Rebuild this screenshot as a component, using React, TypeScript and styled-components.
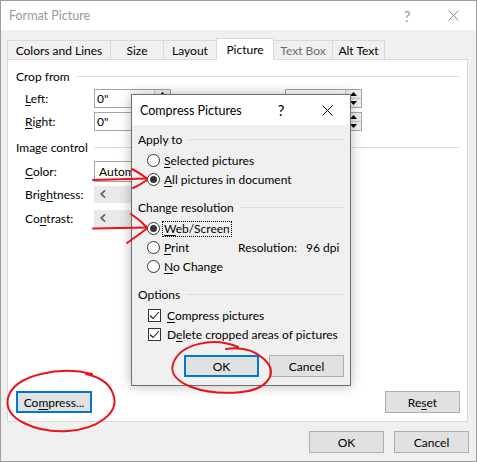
import React from "react";
import styled, { createGlobalStyle } from "styled-components";

const FONT = `Lato, "Noto Sans", Arial, sans-serif`;

const GlobalStyle = createGlobalStyle`
  html, body { margin: 0; padding: 0; background: #ffffff; }
  body { font-family: ${FONT}; font-size: 12px; color: #000; }
  *, *::before, *::after { box-sizing: border-box; }
  u { text-decoration: underline; text-underline-offset: 2px; }
`;

const Window = styled.div`
  position: relative;
  width: 477px;
  height: 462px;
  border: 1px solid #9c9c9c;
  background: #f0f0f0;
  display: flex;
  flex-direction: column;
  overflow: hidden;
`;

const TitleBar = styled.div<{ $active?: boolean }>`
  height: ${(p) => (p.$active ? 30 : 29)}px;
  flex: none;
  background: #ffffff;
  display: flex;
  align-items: center;
  padding-left: 8px;
  color: ${(p) => (p.$active ? "#000" : "#999999")};
  font-size: 12.5px;
`;

const TitleText = styled.span`
  flex: 1;
`;

const CaptionButton = styled.span<{ $active?: boolean }>`
  width: 46px;
  height: 100%;
  display: flex;
  align-items: center;
  justify-content: center;
  color: ${(p) => (p.$active ? "#000" : "#999999")};
  font-size: 15px;
`;

const Body = styled.div`
  flex: 1;
  display: flex;
  flex-direction: column;
  padding: 8px 8px 8px 6px;
`;

const TabRow = styled.div`
  display: flex;
  align-items: flex-end;
  height: 21px;
`;

const Tab = styled.div<{ $w: number; $active?: boolean; $disabled?: boolean }>`
  position: relative;
  z-index: ${(p) => (p.$active ? 2 : 0)};
  width: ${(p) => p.$w}px;
  height: ${(p) => (p.$active ? 22 : 19)}px;
  margin-left: -1px;
  margin-bottom: ${(p) => (p.$active ? -1 : 0)}px;
  border: 1px solid #d9d9d9;
  border-bottom: none;
  background: ${(p) => (p.$active ? "#ffffff" : "#f0f0f0")};
  color: ${(p) => (p.$disabled ? "#6d6d6d" : "#000")};
  display: flex;
  align-items: center;
  justify-content: center;
  padding-top: ${(p) => (p.$active ? 0 : 1)}px;
  white-space: nowrap;
  &:first-child {
    margin-left: 0;
  }
`;

const Panel = styled.div`
  position: relative;
  z-index: 1;
  height: 363px;
  background: #ffffff;
  border: 1px solid #d9d9d9;
  display: flex;
  flex-direction: column;
  padding: 8px 7px 8px 8px;
`;

const GroupHeader = styled.div<{ $mt?: number }>`
  display: flex;
  align-items: center;
  gap: 6px;
  height: 16px;
  margin-top: ${(p) => p.$mt ?? 0}px;
  white-space: nowrap;
  &::after {
    content: "";
    flex: 1;
    height: 1px;
    background: #dcdcdc;
  }
`;

const FieldGrid = styled.div<{ $mt: number; $rows: string; $gap?: number }>`
  display: grid;
  grid-template-columns: 69px 122px 69px 77px;
  grid-template-rows: ${(p) => p.$rows};
  row-gap: ${(p) => p.$gap ?? 0}px;
  align-items: center;
  margin-top: ${(p) => p.$mt}px;
  padding-left: 9px;
`;

const Label = styled.span`
  white-space: nowrap;
`;

const SpinBox = styled.div`
  width: 77px;
  height: 19px;
  border: 1px solid #a5a5a5;
  display: flex;
  background: #fff;
`;

const SpinValue = styled.span`
  flex: 1;
  padding-left: 2px;
  line-height: 17px;
`;

const SpinButtons = styled.div`
  width: 16px;
  border-left: 1px solid #c8c8c8;
  display: flex;
  flex-direction: column;
  background: #f0f0f0;
`;

const SpinHalf = styled.div<{ $down?: boolean }>`
  flex: 1;
  display: flex;
  align-items: center;
  justify-content: center;
  border-top: ${(p) => (p.$down ? "1px solid #c8c8c8" : "none")};
`;

const Combo = styled.div`
  width: 160px;
  height: 21px;
  border: 1px solid #a5a5a5;
  padding-left: 4px;
  line-height: 19px;
  background: #fff;
  grid-column: 2 / span 3;
`;

const Slider = styled.div`
  width: 180px;
  height: 17px;
  background: #e9e9e9;
  display: flex;
  align-items: center;
  padding-left: 6px;
  grid-column: 2 / span 3;
`;

const BottomRow = styled.div`
  margin-top: auto;
  display: flex;
  justify-content: space-between;
`;

const Button = styled.button<{ $default?: boolean; $w?: number }>`
  width: ${(p) => p.$w ?? 75}px;
  height: 22px;
  font-family: ${FONT};
  font-size: 12px;
  color: #000;
  background: #e1e1e1;
  border: ${(p) => (p.$default ? "2px solid #0078d7" : "1px solid #adadad")};
  padding: 0;
  margin: 0;
  display: flex;
  align-items: center;
  justify-content: center;
`;

const MainButtons = styled.div`
  margin-top: 9px;
  margin-right: -1px;
  display: flex;
  justify-content: flex-end;
  gap: 10px;
`;

/* Compress Pictures dialog */
const Dialog = styled.div`
  position: absolute;
  z-index: 5;
  left: 130px;
  top: 93px;
  width: 220px;
  height: 292px;
  border: 1px solid #6f6f6f;
  background: #f0f0f0;
  box-shadow: 0 0 12px rgba(0, 0, 0, 0.28);
  display: flex;
  flex-direction: column;
`;

const DialogBody = styled.div`
  flex: 1;
  display: flex;
  flex-direction: column;
  padding: 6px 6px 8px 6px;
`;

const OptionList = styled.div<{ $indent: number }>`
  display: flex;
  flex-direction: column;
  margin-top: 4px;
  padding-left: ${(p) => p.$indent}px;
`;

const OptionRow = styled.div`
  height: 19px;
  display: flex;
  align-items: center;
  white-space: nowrap;
`;

const RadioOption = styled.span<{ $w?: number }>`
  display: flex;
  align-items: center;
  width: ${(p) => (p.$w ? `${p.$w}px` : "auto")};
`;

const RadioCircle = styled.span<{ $checked?: boolean }>`
  width: 13px;
  height: 13px;
  border-radius: 50%;
  border: 1px solid #333;
  background: #fff;
  display: flex;
  align-items: center;
  justify-content: center;
  margin-right: 1px;
  &::after {
    content: "";
    width: 7px;
    height: 7px;
    border-radius: 50%;
    background: ${(p) => (p.$checked ? "#333" : "transparent")};
  }
`;

const OptionText = styled.span<{ $focus?: boolean }>`
  border: 1px dotted ${(p) => (p.$focus ? "#000" : "transparent")};
  padding: 0 1px;
  margin-left: 1px;
  line-height: 14px;
`;

const CheckBox = styled.span`
  width: 13px;
  height: 13px;
  border: 1px solid #333;
  background: #fff;
  display: flex;
  align-items: center;
  justify-content: center;
  margin-right: 3px;
`;

const InfoText = styled.span<{ $w?: number }>`
  width: ${(p) => (p.$w ? `${p.$w}px` : "auto")};
`;

const DialogButtons = styled.div`
  margin-top: auto;
  display: flex;
  justify-content: flex-end;
  gap: 10px;
`;

const Annotations = styled.svg`
  position: absolute;
  left: -1px;
  top: -1px;
  z-index: 10;
  pointer-events: none;
`;

const CloseGlyph = ({ color }: { color: string }) => (
  <svg width="11" height="11" viewBox="0 0 11 11">
    <path d="M0.5 0.5 L10.5 10.5 M10.5 0.5 L0.5 10.5" stroke={color} strokeWidth="1" />
  </svg>
);

const Tri = ({ down }: { down?: boolean }) => (
  <svg width="7" height="4" viewBox="0 0 7 4">
    <path d={down ? "M0 0 L7 0 L3.5 4 Z" : "M0 4 L7 4 L3.5 0 Z"} fill="#000" />
  </svg>
);

const Chevron = () => (
  <svg width="6" height="8" viewBox="0 0 6 8">
    <path d="M5 0.5 L1.2 4 L5 7.5" stroke="#555" strokeWidth="1.6" fill="none" />
  </svg>
);

const Check = () => (
  <svg width="11" height="9" viewBox="0 0 11 9">
    <path d="M1 4.5 L4 7.5 L10 1" stroke="#222" strokeWidth="1.1" fill="none" />
  </svg>
);

const Spin = ({ value }: { value: string }) => (
  <SpinBox>
    <SpinValue>{value}</SpinValue>
    <SpinButtons>
      <SpinHalf>
        <Tri />
      </SpinHalf>
      <SpinHalf $down>
        <Tri down />
      </SpinHalf>
    </SpinButtons>
  </SpinBox>
);

const Radio = ({
  checked,
  focus,
  children,
  w,
}: {
  checked?: boolean;
  focus?: boolean;
  children: React.ReactNode;
  w?: number;
}) => (
  <RadioOption $w={w}>
    <RadioCircle $checked={checked} />
    <OptionText $focus={focus}>{children}</OptionText>
  </RadioOption>
);

const tabs = [
  { label: "Colors and Lines", w: 104 },
  { label: "Size", w: 54 },
  { label: "Layout", w: 54 },
  { label: "Picture", w: 58, active: true },
  { label: "Text Box", w: 60, disabled: true },
  { label: "Alt Text", w: 53 },
];

export default function App() {
  return (
    <>
      <GlobalStyle />
      <Window>
        <TitleBar>
          <TitleText>Format Picture</TitleText>
          <CaptionButton>?</CaptionButton>
          <CaptionButton>
            <CloseGlyph color="#8a8a8a" />
          </CaptionButton>
        </TitleBar>
        <Body>
          <TabRow>
            {tabs.map((t) => (
              <Tab key={t.label} $w={t.w} $active={t.active} $disabled={t.disabled}>
                {t.label}
              </Tab>
            ))}
          </TabRow>
          <Panel>
            <GroupHeader>Crop from</GroupHeader>
            <FieldGrid $mt={5} $rows="19px 19px" $gap={4}>
              <Label>
                <u>L</u>eft:
              </Label>
              <Spin value={'0"'} />
              <Label />
              <Spin value={""} />
              <Label>
                <u>R</u>ight:
              </Label>
              <Spin value={'0"'} />
              <Label />
              <Spin value={""} />
            </FieldGrid>
            <GroupHeader $mt={8}>Image control</GroupHeader>
            <FieldGrid $mt={5} $rows="22px 24px 24px">
              <Label>
                <u>C</u>olor:
              </Label>
              <Combo>Autom</Combo>
              <Label>
                Brig<u>h</u>tness:
              </Label>
              <Slider>
                <Chevron />
              </Slider>
              <Label>
                Co<u>n</u>trast:
              </Label>
              <Slider>
                <Chevron />
              </Slider>
            </FieldGrid>
            <BottomRow>
              <Button $default $w={76}>
                Co<u>m</u>press...
              </Button>
              <Button>
                Re<u>s</u>et
              </Button>
            </BottomRow>
          </Panel>
          <MainButtons>
            <Button>OK</Button>
            <Button>Cancel</Button>
          </MainButtons>
        </Body>

        <Dialog>
          <TitleBar $active>
            <TitleText>Compress Pictures</TitleText>
            <CaptionButton $active>?</CaptionButton>
            <CaptionButton $active>
              <CloseGlyph color="#000" />
            </CaptionButton>
          </TitleBar>
          <DialogBody>
            <GroupHeader>Apply to</GroupHeader>
            <OptionList $indent={9}>
              <OptionRow>
                <Radio>
                  <u>S</u>elected pictures
                </Radio>
              </OptionRow>
              <OptionRow>
                <Radio checked>
                  <u>A</u>ll pictures in document
                </Radio>
              </OptionRow>
            </OptionList>
            <GroupHeader $mt={10}>Change resolution</GroupHeader>
            <OptionList $indent={9}>
              <OptionRow>
                <Radio checked focus>
                  <u>W</u>eb/Screen
                </Radio>
              </OptionRow>
              <OptionRow>
                <Radio w={91}>
                  <u>P</u>rint
                </Radio>
                <InfoText $w={68}>Resolution:</InfoText>
                <InfoText>96 dpi</InfoText>
              </OptionRow>
              <OptionRow>
                <Radio>
                  <u>N</u>o Change
                </Radio>
              </OptionRow>
            </OptionList>
            <GroupHeader $mt={10}>Options</GroupHeader>
            <OptionList $indent={10}>
              <OptionRow>
                <CheckBox>
                  <Check />
                </CheckBox>
                <OptionText>
                  <u>C</u>ompress pictures
                </OptionText>
              </OptionRow>
              <OptionRow>
                <CheckBox>
                  <Check />
                </CheckBox>
                <OptionText>
                  D<u>e</u>lete cropped areas of pictures
                </OptionText>
              </OptionRow>
            </OptionList>
            <DialogButtons>
              <Button $default>OK</Button>
              <Button>Cancel</Button>
            </DialogButtons>
          </DialogBody>
        </Dialog>

        <Annotations width="477" height="462" viewBox="0 0 477 462">
          <g stroke="#e8141b" strokeWidth="2" fill="none" strokeLinecap="round" strokeLinejoin="round">
            <path d="M93 180 L147 178.5" />
            <path d="M132 169 Q140 173 147 178.5" />
            <path d="M147 180 Q140 185 133 188" />
            <path d="M93 228.5 L147 227.5" />
            <path d="M131 214 Q140 220 147 227.5" />
            <path d="M147 228.5 Q137 236 127 243" />
            <path d="M238 347 C214 337, 180 343, 173 364 C167 384, 205 396, 242 392 C268 389, 279 373, 264 359 C254 350, 240 347, 226 349" />
            <path d="M92 374 C62 366, 14 374, 8 398 C3 420, 38 433, 68 431 C98 429, 118 413, 114 397 C111 384, 100 377, 86 374" />
          </g>
        </Annotations>
      </Window>
    </>
  );
}
